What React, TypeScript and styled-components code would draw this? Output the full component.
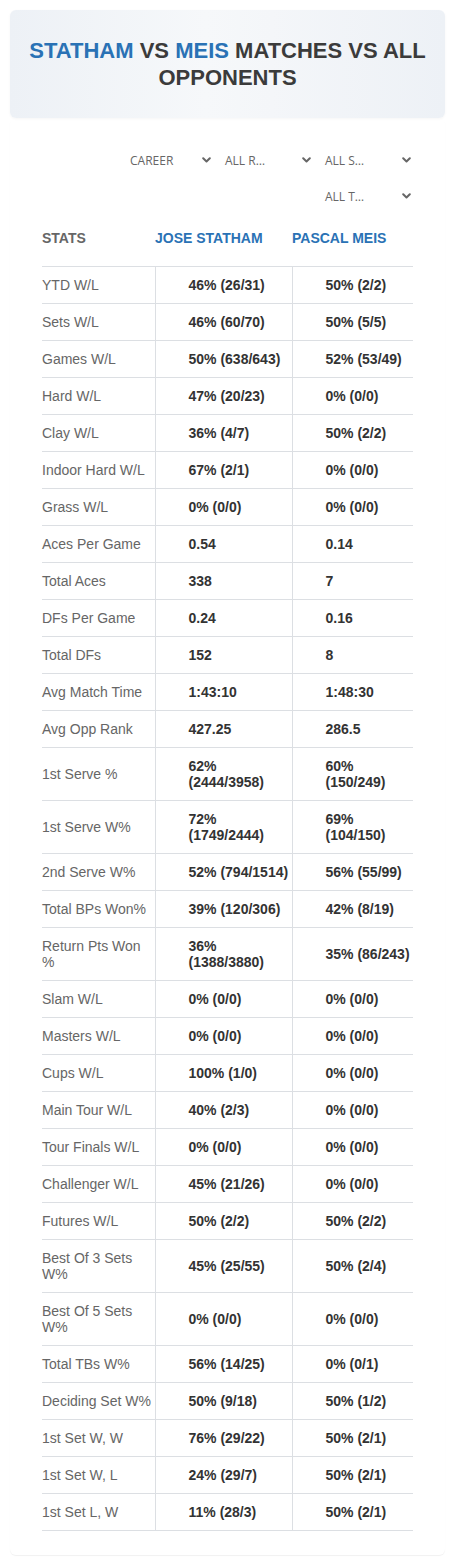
import React from "react";
import styled, { createGlobalStyle } from "styled-components";

const GlobalStyle = createGlobalStyle`
  html, body { margin: 0; padding: 0; background: #ffffff; }
  body { font-family: "Liberation Sans", Arial, sans-serif; }
`;

const Page = styled.div`
  padding: 10px;
  box-sizing: border-box;
  width: 455px;
`;

const HeaderCard = styled.div`
  border-radius: 6px;
  background: linear-gradient(90deg, #edf1f6 0%, #f6f8fa 45%, #f4f6f9 60%, #edf1f6 100%);
  box-shadow: 0 1px 3px rgba(0, 0, 0, 0.04);
  height: 108px;
  display: flex;
  align-items: center;
  justify-content: center;
  padding: 0 12px;
  box-sizing: border-box;
`;

const Title = styled.h1`
  margin: 0;
  font-family: "Liberation Sans", Arial, sans-serif;
  font-size: 22px;
  line-height: 27px;
  font-weight: 700;
  text-align: center;
  color: #3b3b3b;
  text-transform: uppercase;
`;

const Name = styled.span`
  color: #2a72b5;
`;

const Card = styled.div`
  padding: 24px 32px 24px 32px;
  border-radius: 6px;
  box-shadow: 0 1px 1px rgba(0, 0, 0, 0.06);
`;

const Filters = styled.div`
  display: flex;
  flex-wrap: wrap;
  justify-content: flex-end;
  column-gap: 7px;
`;

const Select = styled.div<{ $pad?: number }>`
  width: 93px;
  height: 36px;
  box-sizing: border-box;
  padding-left: ${(p) => p.$pad ?? 5}px;
  padding-right: 2px;
  display: flex;
  align-items: center;
  justify-content: space-between;
  font-family: "Open Sans", "Noto Sans", sans-serif;
  font-size: 12px;
  color: #666666;
  text-transform: uppercase;
`;

const Chevron = () => (
  <svg width="9" height="6" viewBox="0 0 9 6" aria-hidden="true">
    <path d="M1.2 1.2 L4.5 4.5 L7.8 1.2" fill="none" stroke="#666" strokeWidth="2" strokeLinecap="round" strokeLinejoin="round" />
  </svg>
);

const Table = styled.table`
  width: 371px;
  border-collapse: collapse;
  table-layout: fixed;
  font-family: "Liberation Sans", Arial, sans-serif;
  font-size: 14px;
  line-height: 16px;
`;

const Th = styled.th<{ $blue?: boolean }>`
  text-align: left;
  font-weight: 700;
  padding: 16px 0 20px 0;
  color: ${(p) => (p.$blue ? "#2a72b5" : "#666666")};
  border-bottom: 1px solid #dcdfe3;
  white-space: nowrap;
`;

const Label = styled.td`
  color: #666666;
  padding: 10px 2px 10px 0;
  border-bottom: 1px solid #dcdfe3;
  vertical-align: middle;
`;

const Value = styled.td`
  color: #333333;
  font-weight: 700;
  padding: 10px 2px 10px 33px;
  border-bottom: 1px solid #dcdfe3;
  border-left: 1px solid #dcdfe3;
  vertical-align: middle;
`;

const rows: [string, string, string][] = [
  ["YTD W/L", "46% (26/31)", "50% (2/2)"],
  ["Sets W/L", "46% (60/70)", "50% (5/5)"],
  ["Games W/L", "50% (638/643)", "52% (53/49)"],
  ["Hard W/L", "47% (20/23)", "0% (0/0)"],
  ["Clay W/L", "36% (4/7)", "50% (2/2)"],
  ["Indoor Hard W/L", "67% (2/1)", "0% (0/0)"],
  ["Grass W/L", "0% (0/0)", "0% (0/0)"],
  ["Aces Per Game", "0.54", "0.14"],
  ["Total Aces", "338", "7"],
  ["DFs Per Game", "0.24", "0.16"],
  ["Total DFs", "152", "8"],
  ["Avg Match Time", "1:43:10", "1:48:30"],
  ["Avg Opp Rank", "427.25", "286.5"],
  ["1st Serve %", "62% (2444/3958)", "60% (150/249)"],
  ["1st Serve W%", "72% (1749/2444)", "69% (104/150)"],
  ["2nd Serve W%", "52% (794/1514)", "56% (55/99)"],
  ["Total BPs Won%", "39% (120/306)", "42% (8/19)"],
  ["Return Pts Won %", "36% (1388/3880)", "35% (86/243)"],
  ["Slam W/L", "0% (0/0)", "0% (0/0)"],
  ["Masters W/L", "0% (0/0)", "0% (0/0)"],
  ["Cups W/L", "100% (1/0)", "0% (0/0)"],
  ["Main Tour W/L", "40% (2/3)", "0% (0/0)"],
  ["Tour Finals W/L", "0% (0/0)", "0% (0/0)"],
  ["Challenger W/L", "45% (21/26)", "0% (0/0)"],
  ["Futures W/L", "50% (2/2)", "50% (2/2)"],
  ["Best Of 3 Sets W%", "45% (25/55)", "50% (2/4)"],
  ["Best Of 5 Sets W%", "0% (0/0)", "0% (0/0)"],
  ["Total TBs W%", "56% (14/25)", "0% (0/1)"],
  ["Deciding Set W%", "50% (9/18)", "50% (1/2)"],
  ["1st Set W, W", "76% (29/22)", "50% (2/1)"],
  ["1st Set W, L", "24% (29/7)", "50% (2/1)"],
  ["1st Set L, W", "11% (28/3)", "50% (2/1)"],
];

export default function App() {
  return (
    <>
      <GlobalStyle />
      <Page>
        <HeaderCard>
          <Title>
            <Name>Statham</Name> vs <Name>Meis</Name> matches vs all opponents
          </Title>
        </HeaderCard>
        <Card>
          <Filters>
            <Select $pad={10}>
              <span>Career</span>
              <Chevron />
            </Select>
            <Select>
              <span>All R…</span>
              <Chevron />
            </Select>
            <Select>
              <span>All S…</span>
              <Chevron />
            </Select>
            <Select>
              <span>All T…</span>
              <Chevron />
            </Select>
          </Filters>
          <Table>
            <colgroup>
              <col style={{ width: 113 }} />
              <col style={{ width: 137 }} />
              <col style={{ width: 121 }} />
            </colgroup>
            <thead>
              <tr>
                <Th>STATS</Th>
                <Th $blue>JOSE STATHAM</Th>
                <Th $blue>PASCAL MEIS</Th>
              </tr>
            </thead>
            <tbody>
              {rows.map(([label, a, b]) => (
                <tr key={label}>
                  <Label>{label}</Label>
                  <Value>{a}</Value>
                  <Value>{b}</Value>
                </tr>
              ))}
            </tbody>
          </Table>
        </Card>
      </Page>
    </>
  );
}
